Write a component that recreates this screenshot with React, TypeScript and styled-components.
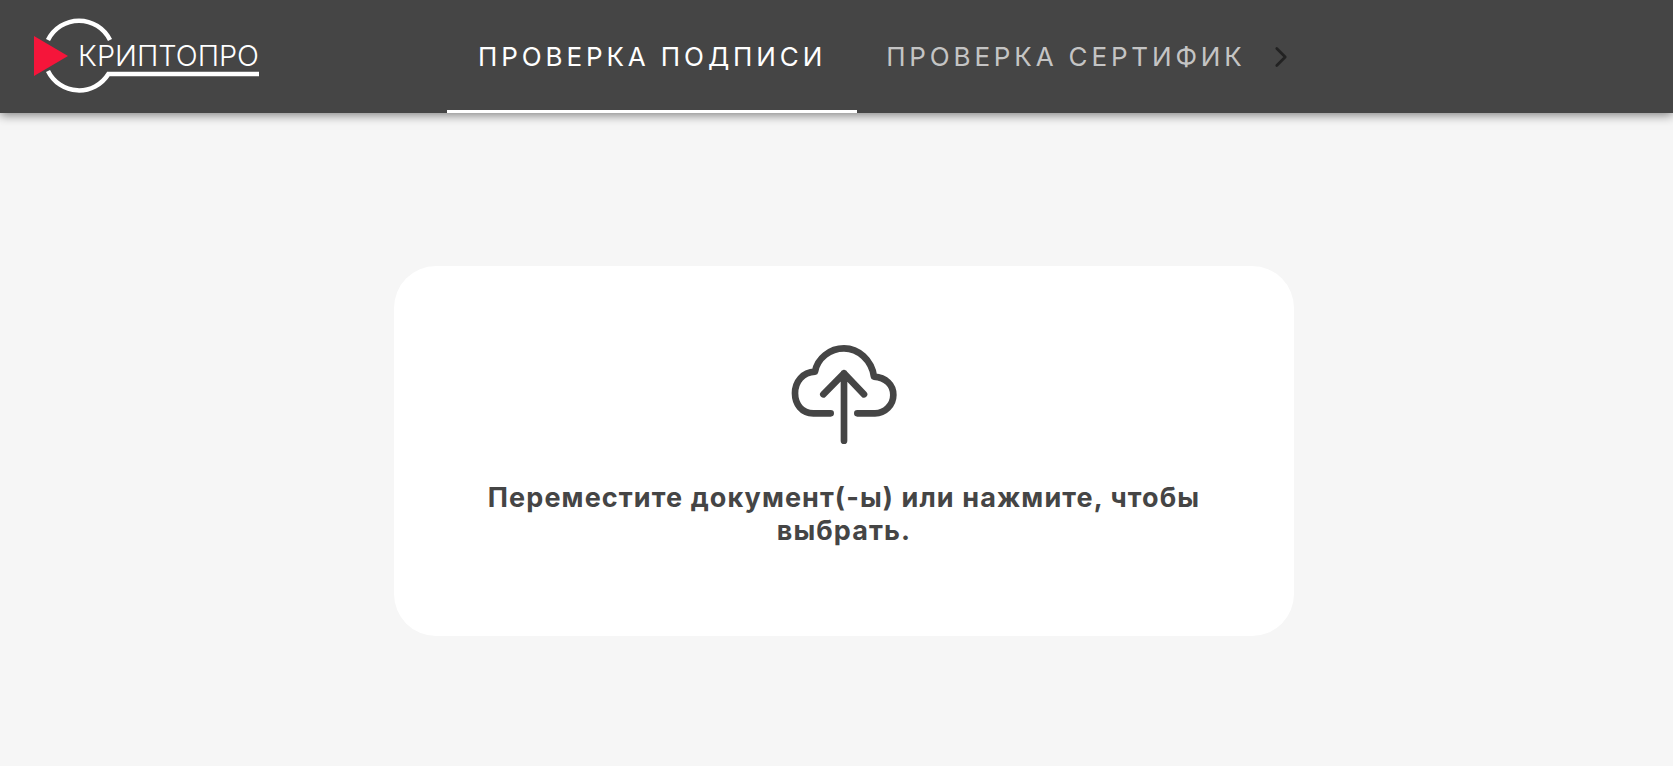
import * as React from 'react'
import styled, { createGlobalStyle } from 'styled-components'
import { ChevronRight } from 'lucide-react'

const GlobalStyle = createGlobalStyle`
  html, body {
    margin: 0;
    padding: 0;
    height: 100%;
    overflow: hidden;
    background: #f6f6f6;
    font-family: 'Inter', 'Open Sans', sans-serif;
  }
`

const Page = styled.div`
  display: flex;
  flex-direction: column;
  height: 766px;
  background: #f6f6f6;
`

const Header = styled.header`
  display: flex;
  align-items: stretch;
  flex: 0 0 113px;
  background: #454545;
  box-shadow: 0 2px 10px rgba(0, 0, 0, 0.5);
`

const LogoLink = styled.a`
  display: flex;
  align-items: flex-start;
  flex: 0 0 447px;
  padding-top: 16px;
  box-sizing: border-box;
`

const Tabs = styled.nav`
  display: flex;
  align-items: stretch;
`

const Tab = styled.div<{ $active?: boolean }>`
  display: flex;
  align-items: center;
  flex: 0 0 auto;
  padding: 0 31px;
  box-sizing: border-box;
  font-size: 26px;
  font-weight: 400;
  letter-spacing: 3.9px;
  white-space: nowrap;
  color: ${(p) => (p.$active ? '#ffffff' : 'rgba(255, 255, 255, 0.7)')};
  border-bottom: 3px solid ${(p) => (p.$active ? '#ffffff' : 'transparent')};
  border-top: 3px solid transparent;

  & + & {
    padding-left: 29px;
    letter-spacing: 3.85px;
  }
`

const ScrollButton = styled.div`
  display: flex;
  align-items: center;
  margin-left: -13px;
  color: #222222;
`

const Main = styled.main`
  display: flex;
  justify-content: center;
  align-items: flex-start;
  flex: 1;
  padding: 153px 0 0 15px;
`

const DropZone = styled.div`
  display: flex;
  flex-direction: column;
  align-items: center;
  width: 900px;
  height: 370px;
  box-sizing: border-box;
  padding-top: 64px;
  background: #ffffff;
  border-radius: 42px;
`

const UploadIcon = styled.svg`
  display: block;
  width: 160px;
  height: 120px;
`

const Hint = styled.p`
  width: 760px;
  margin: 31px 0 0;
  font-size: 27px;
  font-weight: 700;
  letter-spacing: 1.1px;
  line-height: 33px;
  text-align: center;
  color: #454545;
`

const Logo = () => (
  <svg width="270" height="80" viewBox="0 16 270 80" role="img" aria-label="КриптоПро">
    <path d="M48 40 A34.5 34.5 0 0 1 110 40" fill="none" stroke="#fff" strokeWidth="4.5" />
    <path d="M48 71 A34.5 34.5 0 0 0 108.4 74 H259" fill="none" stroke="#fff" strokeWidth="4.5" />
    <polygon points="34,36 68,56 34,76" fill="#f5153a" />
    <text
      x="78"
      y="66"
      fontFamily="'Inter', sans-serif"
      fontWeight="300"
      fontSize="29"
      fill="#fff"
      textLength="181"
      lengthAdjust="spacingAndGlyphs"
    >
      КРИПТОПРО
    </text>
  </svg>
)

export default function App() {
  return (
    <Page>
      <GlobalStyle />
      <Header>
        <LogoLink>
          <Logo />
        </LogoLink>
        <Tabs>
          <Tab $active>ПРОВЕРКА ПОДПИСИ</Tab>
          <Tab>ПРОВЕРКА СЕРТИФИК</Tab>
        </Tabs>
        <ScrollButton>
          <ChevronRight size={34} strokeWidth={1.9} />
        </ScrollButton>
      </Header>
      <Main>
        <DropZone>
          <UploadIcon viewBox="12 0 480 360" fill="none" stroke="#454545" strokeWidth="20" strokeLinecap="round" strokeLinejoin="round">
            <path d="M212 250 H160 C125 250 105 222 105 190 C105 155 128 127 165 125 C172 85 210 55 252 55 C295 55 335 90 342 140 C378 143 400 165 400 195 C400 225 375 250 345 250 H292" />
            <path d="M252 332 V130 M190 193 L252 130 L312 193" />
          </UploadIcon>
          <Hint>Переместите документ(-ы) или нажмите, чтобы выбрать.</Hint>
        </DropZone>
      </Main>
    </Page>
  )
}
